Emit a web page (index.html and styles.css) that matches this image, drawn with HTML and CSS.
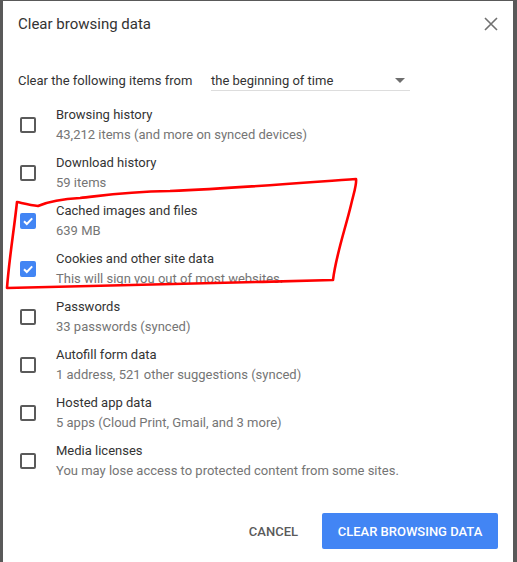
FILE: index.html
```html
<!DOCTYPE html>
<html>
<head>
  <title>Clear browsing data</title>
  <link rel="stylesheet" href="styles.css">
</head>
<body>
  <div class="dialog">
    <div class="dialog-header">
      <h1 class="dialog-title">Clear browsing data</h1>
      <svg class="close-icon" width="14" height="14" viewBox="0 0 14 14">
        <path d="M1 1 L13 13 M13 1 L1 13" stroke="#707070" stroke-width="1.6" fill="none"/>
      </svg>
    </div>

    <div class="period-row">
      <span class="period-label">Clear the following items from</span>
      <div class="period-select">
        <span>the beginning of time</span>
        <span class="select-arrow"></span>
      </div>
    </div>

    <ul class="items">
      <li class="item">
        <span class="checkbox"></span>
        <div class="item-text">
          <div class="item-title">Browsing history</div>
          <div class="item-sub">43,212 items (and more on synced devices)</div>
        </div>
      </li>
      <li class="item">
        <span class="checkbox"></span>
        <div class="item-text">
          <div class="item-title">Download history</div>
          <div class="item-sub">59 items</div>
        </div>
      </li>
      <li class="item">
        <span class="checkbox checked">
          <svg width="12" height="12" viewBox="0 0 12 12"><path d="M2 6.2 L4.8 9 L10.2 3.4" stroke="#fff" stroke-width="2" fill="none"/></svg>
        </span>
        <div class="item-text">
          <div class="item-title">Cached images and files</div>
          <div class="item-sub">639 MB</div>
        </div>
      </li>
      <li class="item">
        <span class="checkbox checked">
          <svg width="12" height="12" viewBox="0 0 12 12"><path d="M2 6.2 L4.8 9 L10.2 3.4" stroke="#fff" stroke-width="2" fill="none"/></svg>
        </span>
        <div class="item-text">
          <div class="item-title">Cookies and other site data</div>
          <div class="item-sub">This will sign you out of most websites.</div>
        </div>
      </li>
      <li class="item">
        <span class="checkbox"></span>
        <div class="item-text">
          <div class="item-title">Passwords</div>
          <div class="item-sub">33 passwords (synced)</div>
        </div>
      </li>
      <li class="item">
        <span class="checkbox"></span>
        <div class="item-text">
          <div class="item-title">Autofill form data</div>
          <div class="item-sub">1 address, 521 other suggestions (synced)</div>
        </div>
      </li>
      <li class="item">
        <span class="checkbox"></span>
        <div class="item-text">
          <div class="item-title">Hosted app data</div>
          <div class="item-sub">5 apps (Cloud Print, Gmail, and 3 more)</div>
        </div>
      </li>
      <li class="item">
        <span class="checkbox"></span>
        <div class="item-text">
          <div class="item-title">Media licenses</div>
          <div class="item-sub">You may lose access to protected content from some sites.</div>
        </div>
      </li>
    </ul>

    <div class="dialog-buttons">
      <button class="btn-cancel">CANCEL</button>
      <button class="btn-clear">CLEAR BROWSING DATA</button>
    </div>

    <!-- hand drawn marker around the two checked items -->
    <svg class="scribble" width="517" height="562" viewBox="0 0 517 562">
      <path d="M17 202 C 14 230, 9 260, 7 288 C 100 286, 220 283, 333 280 C 336 255, 345 230, 351 205 C 354 192, 357 184, 356 179 C 300 183, 240 188, 170 191 C 120 192, 100 196, 80 198 C 60 199, 45 203, 38 206 C 30 205, 22 203, 17 202"
            stroke="#ff0000" stroke-width="2.6" fill="none" stroke-linejoin="round" stroke-linecap="round"/>
    </svg>
  </div>
</body>
</html>
```

FILE: styles.css
```css
body {
  margin: 0;
  background-color: #595959;
  font-family: Roboto, "Liberation Sans", sans-serif;
  color: #333;
}

.dialog {
  position: relative;
  background-color: #fff;
  margin: 1px 4px 0 3px;
  height: 561px;
  box-sizing: border-box;
}

.dialog-header {
  display: flex;
  justify-content: space-between;
  align-items: center;
  padding: 13px 15px 0 15px;
  height: 20px;
}

.dialog-title {
  margin: 0;
  font-size: 15px;
  font-weight: 400;
  line-height: 20px;
  color: #333;
}

.close-icon {
  display: block;
}

.period-row {
  display: flex;
  align-items: center;
  margin-top: 36px;
  padding-left: 15px;
  font-size: 13px;
  height: 20px;
}

.period-label {
  width: 193px;
}

.period-select {
  display: flex;
  justify-content: space-between;
  align-items: center;
  width: 199px;
  height: 20px;
  border-bottom: 1px solid #ddd;
  margin-top: 1px;
  box-sizing: content-box;
}

.select-arrow {
  width: 0;
  height: 0;
  border-left: 5px solid transparent;
  border-right: 5px solid transparent;
  border-top: 5px solid #6e6e6e;
  margin-right: 5px;
}

.items {
  list-style-type: none;
  margin: 11px 0 0 0;
  padding: 0;
}

.item {
  display: flex;
  align-items: center;
  height: 48px;
  padding-left: 17px;
}

.checkbox {
  display: flex;
  align-items: center;
  justify-content: center;
  width: 16px;
  height: 16px;
  box-sizing: border-box;
  border: 2px solid #5a5a5a;
  border-radius: 2px;
  margin-right: 20px;
}

.checkbox.checked {
  background-color: #4285f4;
  border-color: #4285f4;
}

.item-text {
  font-size: 13px;
  line-height: 20px;
}

.item-title {
  color: #333;
}

.item-sub {
  color: #757575;
}

.dialog-buttons {
  display: flex;
  justify-content: flex-end;
  align-items: center;
  margin-top: 28px;
  padding-right: 15px;
}

.dialog-buttons button {
  font-family: Roboto, "Liberation Sans", sans-serif;
  font-size: 13px;
  font-weight: 500;
  border: none;
  cursor: pointer;
}

.btn-cancel {
  background: none;
  color: #5a5a5a;
  padding: 0 24px;
  height: 36px;
}

.btn-clear {
  background-color: #4285f4;
  color: #fff;
  width: 176px;
  height: 36px;
  border-radius: 2px;
}

.scribble {
  position: absolute;
  left: -3px;
  top: -1px;
  pointer-events: none;
}
```
